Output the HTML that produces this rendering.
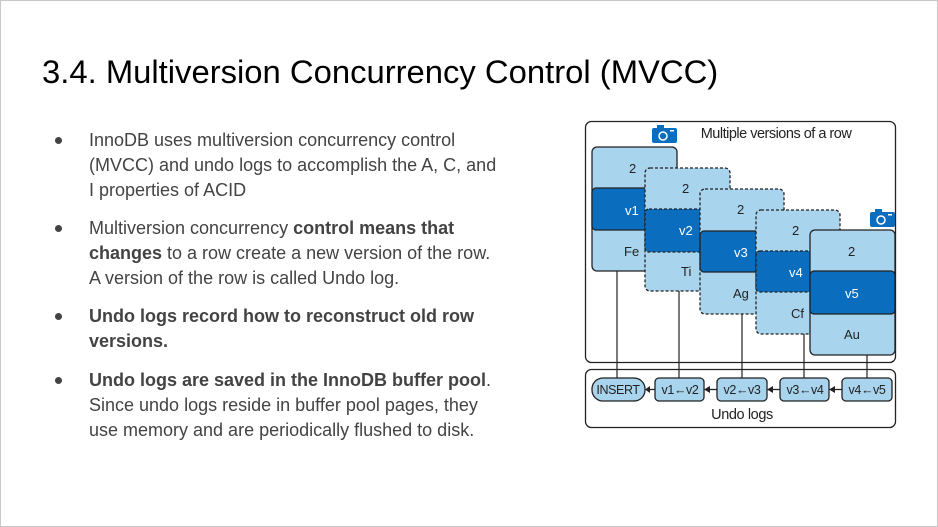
<!DOCTYPE html>
<html><head><meta charset="utf-8"><style>
html,body{margin:0;padding:0;}
body{width:938px;height:527px;position:relative;overflow:hidden;background:#fff;font-family:"Liberation Sans",Arial,sans-serif;}
.frame{position:absolute;left:0;top:0;width:936px;height:525px;border:1px solid #c8c8c8;}
h1{position:absolute;left:42px;top:53px;margin:0;font-weight:normal;font-size:32.8px;color:#000;white-space:nowrap;}
.t{position:absolute;left:89px;font-size:18px;color:#434343;white-space:nowrap;line-height:25px;}
.b{position:absolute;left:55px;width:7px;height:7px;border-radius:50%;background:#434343;}
strong{font-weight:bold;}
</style></head><body>
<div class="frame"></div>
<h1>3.4. Multiversion Concurrency Control (MVCC)</h1>

<div class="b" style="top:137px"></div>
<div class="t" style="top:128px">InnoDB uses multiversion concurrency control<br>(MVCC) and undo logs to accomplish the A, C, and<br>I properties of ACID</div>
<div class="b" style="top:225px"></div>
<div class="t" style="top:216px">Multiversion concurrency <strong>control means that</strong><br><strong>changes</strong> to a row create a new version of the row.<br>A version of the row is called Undo log.</div>
<div class="b" style="top:313px"></div>
<div class="t" style="top:304px"><strong>Undo logs record how to reconstruct old row</strong><br><strong>versions.</strong></div>
<div class="b" style="top:377px"></div>
<div class="t" style="top:368px"><strong>Undo logs are saved in the InnoDB buffer pool</strong>.<br>Since undo logs reside in buffer pool pages, they<br>use memory and are periodically flushed to disk.</div>

<svg style="position:absolute;left:0;top:0" width="938" height="527" font-family="Liberation Sans, Arial, sans-serif" font-size="13" fill="#222">
<rect x="585.5" y="121.5" width="310" height="241" rx="6" fill="#fff" stroke="#222" stroke-width="1.3"/>
<rect x="585.5" y="369.5" width="310" height="58" rx="6" fill="#fff" stroke="#222" stroke-width="1.3"/>
<text x="776" y="138" text-anchor="middle" font-size="14.5" style="letter-spacing:-0.5px">Multiple versions of a row</text>
<text x="742" y="419" text-anchor="middle" font-size="14.5" style="letter-spacing:-0.4px">Undo logs</text>
<g stroke="#222" stroke-width="1.2">
<line x1="617" y1="271" x2="617" y2="378"/><line x1="679" y1="291" x2="679" y2="378"/>
<line x1="742" y1="314" x2="742" y2="378"/><line x1="804" y1="334" x2="804" y2="378"/>
<line x1="867" y1="355" x2="867" y2="378"/>
</g>
<g stroke="#222" stroke-width="1.3">
<rect x="592" y="147" width="85" height="124" rx="5" fill="#a9d4ee"/>
<rect x="592" y="188" width="85" height="42" rx="4" fill="#0a6dbe"/>
</g>
<text x="629" y="173">2</text><text x="625" y="215" fill="#fff">v1</text><text x="624" y="256">Fe</text>
<g stroke="#222" stroke-width="1.3" stroke-dasharray="3,2">
<rect x="645" y="168" width="85" height="123" rx="5" fill="#a9d4ee"/>
<rect x="645" y="209" width="85" height="43" rx="4" fill="#0a6dbe"/>
</g>
<text x="682" y="193">2</text><text x="679" y="235" fill="#fff">v2</text><text x="681" y="276">Ti</text>
<g stroke="#222" stroke-width="1.3" stroke-dasharray="3,2">
<rect x="700" y="189" width="84" height="125" rx="5" fill="#a9d4ee"/>
</g>
<rect x="700" y="231" width="84" height="41" rx="4" fill="#0a6dbe" stroke="#222" stroke-width="1.3"/>
<text x="737" y="214">2</text><text x="734" y="257" fill="#fff">v3</text><text x="733" y="298">Ag</text>
<g stroke="#222" stroke-width="1.3" stroke-dasharray="3,2">
<rect x="756" y="210" width="84" height="124" rx="5" fill="#a9d4ee"/>
<rect x="756" y="251" width="84" height="41" rx="4" fill="#0a6dbe"/>
</g>
<text x="792" y="235">2</text><text x="789" y="277" fill="#fff">v4</text><text x="791" y="318">Cf</text>
<g stroke="#222" stroke-width="1.3">
<rect x="810" y="230" width="85" height="125" rx="5" fill="#a9d4ee"/>
<rect x="810" y="271" width="85" height="43" rx="4" fill="#0a6dbe"/>
</g>
<text x="848" y="256">2</text><text x="845" y="298" fill="#fff">v5</text><text x="844" y="339">Au</text>
<g>
<rect x="652" y="128" width="25" height="15" rx="2" fill="#0a6dbe"/><rect x="657" y="125" width="7" height="4" fill="#0a6dbe"/>
<circle cx="663" cy="136" r="4" fill="none" stroke="#fff" stroke-width="1.5"/><rect x="670" y="130" width="4" height="1.5" fill="#fff"/>
<rect x="870" y="212" width="25" height="15" rx="2" fill="#0a6dbe"/><rect x="875" y="209" width="7" height="4" fill="#0a6dbe"/>
<circle cx="881" cy="220" r="4" fill="none" stroke="#fff" stroke-width="1.5"/><rect x="888" y="214" width="4" height="1.5" fill="#fff"/>
</g>
<g stroke="#222" stroke-width="1.3" fill="#a9d4ee">
<rect x="592" y="378" width="53" height="23" rx="11"/>
<rect x="655" y="378" width="49" height="23" rx="4"/>
<rect x="717" y="378" width="50" height="23" rx="4"/>
<rect x="780" y="378" width="49" height="23" rx="4"/>
<rect x="842" y="378" width="50" height="23" rx="4"/>
<line x1="655" y1="389.5" x2="649" y2="389.5"/><line x1="717" y1="389.5" x2="710" y2="389.5"/>
<line x1="780" y1="389.5" x2="773" y2="389.5"/><line x1="842" y1="389.5" x2="835" y2="389.5"/>
</g>
<g fill="#222">
<polygon points="645,389.5 650,386 650,393"/><polygon points="704,389.5 710,386 710,393"/>
<polygon points="767,389.5 773,386 773,393"/><polygon points="829,389.5 835,386 835,393"/>
</g>
<g font-size="12.5" text-anchor="middle" style="letter-spacing:-0.4px">
<text x="618" y="394">INSERT</text><text x="680" y="394">v1←v2</text><text x="742" y="394">v2←v3</text>
<text x="805" y="394">v3←v4</text><text x="867" y="394">v4←v5</text>
</g>
</svg>
</body></html>
